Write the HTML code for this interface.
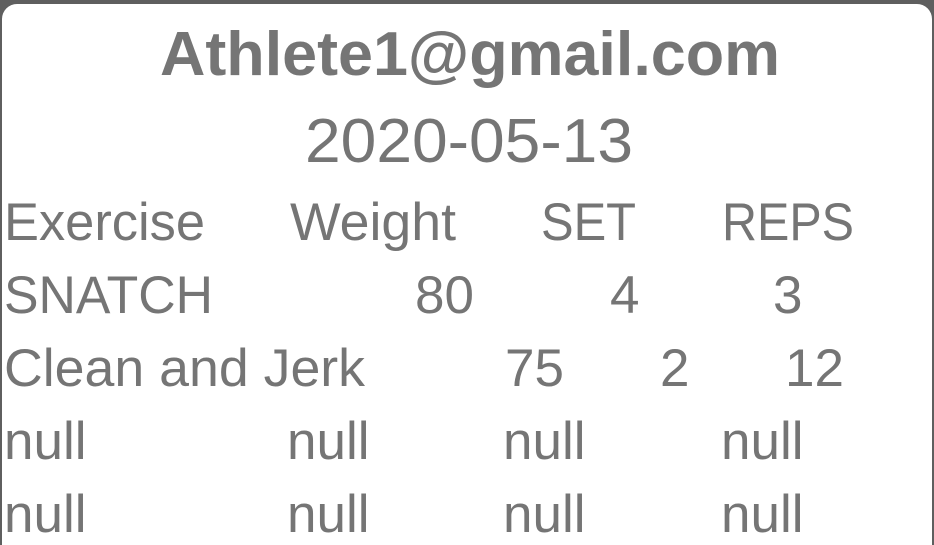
<!DOCTYPE html>
<html><head><meta charset="utf-8"><style>
html,body{margin:0;padding:0;width:934px;height:545px;overflow:hidden;background:#5f5f5f}
svg{display:block}
</style></head><body>
<svg width="934" height="545" xmlns="http://www.w3.org/2000/svg">
<rect x="2" y="4" width="930" height="560" rx="15" fill="#fff"/>
<g fill="#757575" font-family="Liberation Sans, sans-serif">
<text x="470" y="75" font-size="62" font-weight="bold" text-anchor="middle" textLength="620" lengthAdjust="spacingAndGlyphs">Athlete1@gmail.com</text>
<text x="469" y="162" font-size="62" text-anchor="middle" textLength="328" lengthAdjust="spacingAndGlyphs">2020-05-13</text>
<g font-size="53">
<text x="4" y="240" textLength="201" lengthAdjust="spacingAndGlyphs">Exercise</text>
<text x="290" y="240" textLength="166" lengthAdjust="spacingAndGlyphs">Weight</text>
<text x="541" y="240" textLength="95" lengthAdjust="spacingAndGlyphs">SET</text>
<text x="722" y="240" textLength="132" lengthAdjust="spacingAndGlyphs">REPS</text>
<text x="4" y="313" textLength="209" lengthAdjust="spacingAndGlyphs">SNATCH</text>
<text x="415" y="313">80</text>
<text x="610" y="313">4</text>
<text x="773" y="313">3</text>
<text x="4" y="386" textLength="361" lengthAdjust="spacingAndGlyphs">Clean and Jerk</text>
<text x="505" y="386">75</text>
<text x="660" y="386">2</text>
<text x="785" y="386">12</text>
<text x="4" y="459">null</text><text x="287" y="459">null</text><text x="503" y="459">null</text><text x="721" y="459">null</text>
<text x="4" y="532">null</text><text x="287" y="532">null</text><text x="503" y="532">null</text><text x="721" y="532">null</text>
</g></g>
</svg>
</body></html>
